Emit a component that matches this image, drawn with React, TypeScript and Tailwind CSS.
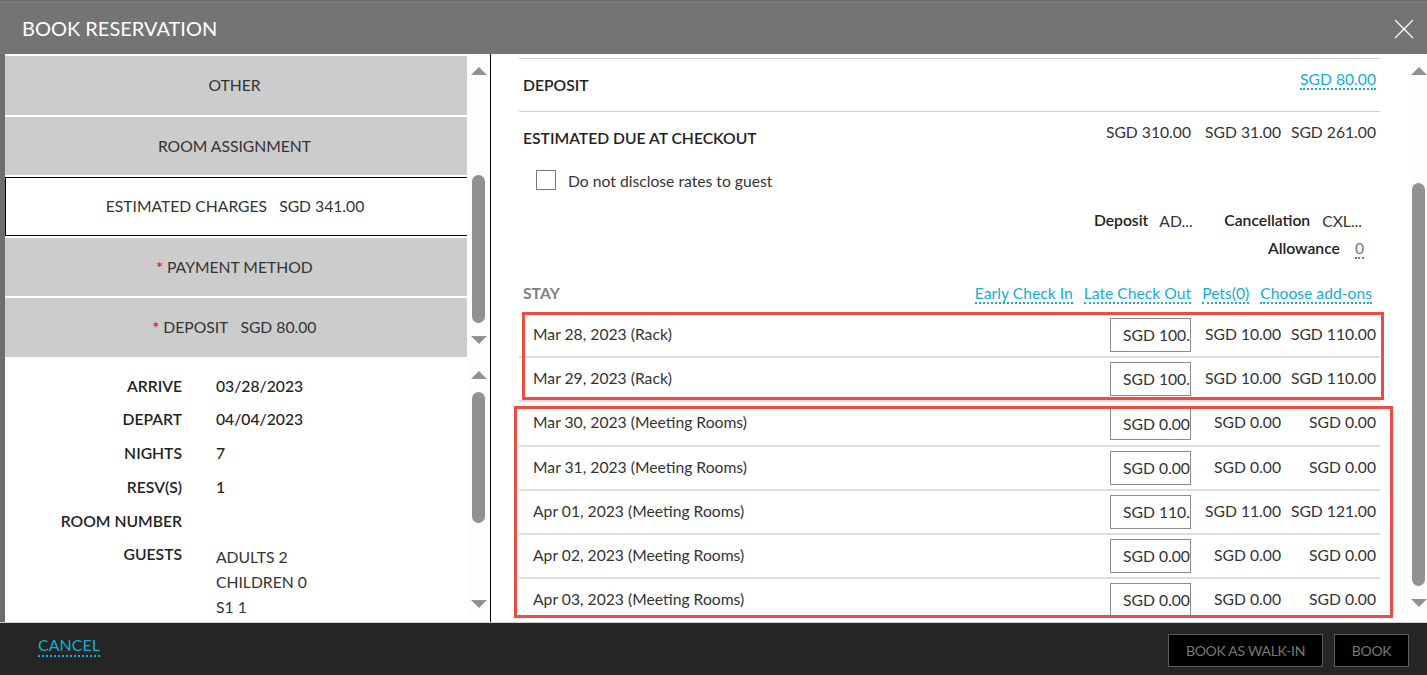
import React from "react";

function Arrow({ up, className = "" }: { up?: boolean; className?: string }) {
  return (
    <svg width="16" height="8" viewBox="0 0 16 8" className={className}>
      <path d={up ? "M0 8 L8 0 L16 8 Z" : "M0 0 L8 8 L16 0 Z"} fill="#919191" />
    </svg>
  );
}

function Nav({ children, active, h }: { children: React.ReactNode; active?: boolean; h: string }) {
  return (
    <div
      className={
        "flex items-center justify-center pr-[3px] text-[15.7px] text-[#333] " +
        h +
        " " +
        (active ? "bg-white border border-black border-r-0" : "bg-[#cccccc]")
      }
    >
      {children}
    </div>
  );
}

const stars = <span className="text-[#e0201b] font-bold mr-1">*</span>;

function Info({ label, value, h }: { label: string; value?: string; h: string }) {
  return (
    <div className={"flex items-center " + h}>
      <div className="w-[177px] text-right font-semibold text-[15.7px] text-[#222]">{label}</div>
      <div className="ml-[34px] font-medium text-[15.7px] text-[#222]">{value}</div>
    </div>
  );
}

function Link({ children, className = "" }: { children: React.ReactNode; className?: string }) {
  return (
    <span className={"text-[15.7px] leading-[18px] text-[#12aed6] border-b-2 border-dotted border-[#12aed6] " + className}>
      {children}
    </span>
  );
}

const rows = [
  ["Mar 28, 2023 (Rack)", "SGD 100.", "SGD 10.00", "SGD 110.00"],
  ["Mar 29, 2023 (Rack)", "SGD 100.", "SGD 10.00", "SGD 110.00"],
  ["Mar 30, 2023 (Meeting Rooms)", "SGD 0.00", "SGD 0.00", "SGD 0.00"],
  ["Mar 31, 2023 (Meeting Rooms)", "SGD 0.00", "SGD 0.00", "SGD 0.00"],
  ["Apr 01, 2023 (Meeting Rooms)", "SGD 110.", "SGD 11.00", "SGD 121.00"],
  ["Apr 02, 2023 (Meeting Rooms)", "SGD 0.00", "SGD 0.00", "SGD 0.00"],
  ["Apr 03, 2023 (Meeting Rooms)", "SGD 0.00", "SGD 0.00", "SGD 0.00"],
];

export default function App() {
  return (
    <div className="relative w-[1427px] h-[675px] overflow-hidden bg-[#6e6e6e] pt-[2px] font-['Lato',sans-serif] text-[#333]">
      {/* Header */}
      <div className="h-[52px] flex items-center justify-between pl-[22px] pr-[5px] bg-[#747474] border-t border-[#808080]">
        <div className="text-[20px] text-white -mt-[2px]">BOOK RESERVATION</div>
        <svg width="20" height="20" viewBox="0 0 20 20" className="mr-[8px]">
          <path d="M1 1 L19 19 M19 1 L1 19" stroke="#fff" strokeWidth="1.2" />
        </svg>
      </div>

      {/* Body */}
      <div className="ml-[5px] h-[568px] flex bg-white">
        {/* Left column */}
        <div className="w-[486px] h-full border-r border-black flex flex-col">
          <div className="h-[303px] flex overflow-hidden">
            <div className="w-[462px] pt-[2px] flex flex-col gap-[2px]">
              <Nav h="h-[59px]">OTHER</Nav>
              <Nav h="h-[58px] pt-[2px]">ROOM ASSIGNMENT</Nav>
              <Nav h="h-[59px]" active>ESTIMATED CHARGES<span className="ml-3">SGD 341.00</span></Nav>
              <Nav h="h-[58px] pt-[2px]">{stars}PAYMENT METHOD</Nav>
              <Nav h="h-[59px]">{stars}DEPOSIT<span className="ml-3">SGD 80.00</span></Nav>
            </div>
            <div className="w-[23px] bg-[#fdfdfd] flex flex-col items-center pt-[13px]">
              <Arrow up />
              <div className="mt-[100px] w-[13px] h-[148px] rounded-[7px] bg-[#919191]" />
              <Arrow className="mt-[13px]" />
            </div>
          </div>
          <div className="flex-1 flex overflow-hidden">
            <div className="w-[462px] pt-[13px]">
              <Info label="ARRIVE" value="03/28/2023" h="h-[33px]" />
              <Info label="DEPART" value="04/04/2023" h="h-[33px]" />
              <Info label="NIGHTS" value="7" h="h-[35px]" />
              <Info label="RESV(S)" value="1" h="h-[34px]" />
              <Info label="ROOM NUMBER" h="h-[34px]" />
              <div className="flex -mt-[1px]">
                <div className="w-[177px] text-right font-semibold text-[15.7px] text-[#222] leading-[33px]">GUESTS</div>
                <div className="ml-[34px] pt-[7px] text-[15.7px] leading-[25px] text-[#333]">
                  <div>ADULTS 2</div>
                  <div>CHILDREN 0</div>
                  <div>S1 1</div>
                </div>
              </div>
            </div>
            <div className="w-[23px] bg-[#fdfdfd] flex flex-col items-center pt-[14px]">
              <Arrow up />
              <div className="mt-[13px] w-[13px] h-[131px] rounded-[7px] bg-[#919191]" />
              <Arrow className="mt-[77px]" />
            </div>
          </div>
        </div>

        {/* Right column */}
        <div className="flex-1 flex overflow-hidden">
          <div className="w-[919px] pl-[28px] pr-[30px] overflow-hidden">
            <div className="mt-[4px] h-[54px] border-t border-b border-[#cfcfcf] flex items-center justify-between pl-[4px] pr-[4px]">
              <div className="mt-[2px] font-semibold text-[15.7px] text-[#222]">DEPOSIT</div>
              <Link className="-mt-[11px]">SGD 80.00</Link>
            </div>
            <div className="h-[53px] flex justify-between pl-[4px] pr-[4px]">
              <div className="pt-[17px] font-semibold text-[15.7px] leading-[18px] text-[#222]">ESTIMATED DUE AT CHECKOUT</div>
              <div className="pt-[11px] flex text-[15.7px] leading-[18px]">
                <span>SGD 310.00</span>
                <span className="w-[90px] text-right">SGD 31.00</span>
                <span className="w-[95px] text-right">SGD 261.00</span>
              </div>
            </div>
            <div className="h-[30px] ml-[17px] flex items-center text-[15.7px]">
              <div className="w-[20px] h-[20px] border border-[#777] bg-white" />
              <span className="ml-[12px] mt-[4px]">Do not disclose rates to guest</span>
            </div>
            <div className="mt-[14px] flex justify-end items-center h-[24px] text-[15.7px] pr-[18px]">
              <span className="font-semibold text-[#222] mr-[11px]">Deposit</span>
              <span className="w-[65px] mt-[2px]">AD...</span>
              <span className="font-semibold text-[#222] mr-[12px]">Cancellation</span>
              <span className="mt-[2px]">CXL...</span>
            </div>
            <div className="mt-[4px] flex justify-end items-center h-[24px] text-[15.7px] pr-[16px]">
              <span className="font-semibold text-[#222] mr-[15px]">Allowance</span>
              <span className="text-[#777] leading-[17px] border-b-2 border-dotted border-[#777]">0</span>
            </div>
            <div className="mt-[19px] h-[28px] flex items-center pl-[4px] pr-[8px]">
              <span className="font-bold text-[15.7px] text-[#808080]">STAY</span>
              <div className="ml-auto flex gap-[11px]">
                <Link>Early Check In</Link>
                <Link>Late Check Out</Link>
                <Link>Pets(0)</Link>
                <Link>Choose add-ons</Link>
              </div>
            </div>
            <div className="mt-[6px] flex flex-col">
              {rows.map((r, i) => (
                <div
                  key={i}
                  className={
                    "h-[44.2px] shrink-0 border-[#dddddd] flex items-start pl-[14px] pr-[4px] text-[15.7px] text-[#333] " +
                    (i === rows.length - 1 ? "border-b-0" : "border-b-2")
                  }
                >
                  <span className="mt-[11px] leading-[18px]">{r[0]}</span>
                  <div className="ml-auto mt-[4px] w-[81px] h-[34px] border border-[#8c8c8c] flex items-center pl-[12px] pt-[2px] overflow-hidden whitespace-nowrap">
                    {r[1]}
                  </div>
                  <span className="mt-[11px] leading-[18px] w-[90px] text-right">{r[2]}</span>
                  <span className="mt-[11px] leading-[18px] w-[95px] text-right">{r[3]}</span>
                </div>
              ))}
            </div>
          </div>
          <div className="w-[17px] bg-[#fdfdfd] flex flex-col items-center pt-[13px] overflow-hidden">
            <Arrow up />
            <div className="mt-[108px] w-[13px] h-[403px] rounded-[7px] bg-[#919191]" />
            <Arrow className="mt-[13px]" />
          </div>
        </div>
      </div>

      {/* Footer */}
      <div className="h-[53px] bg-[#252525] border-t border-[#cfcfcf] flex items-center pl-[38px] pr-[18px]">
        <span className="-mt-[6px] text-[16px] leading-[20px] text-[#12aed6] border-b-2 border-dotted border-[#12aed6]">CANCEL</span>
        <button className="ml-auto w-[155px] h-[33px] mt-[2px] bg-black border border-[#5c5c5c] text-[#777] text-[14px] tracking-[-0.3px]">BOOK AS WALK-IN</button>
        <button className="ml-[11px] w-[75px] h-[33px] mt-[2px] bg-black border border-[#5c5c5c] text-[#777] text-[14px] tracking-[-0.3px]">BOOK</button>
      </div>

      {/* Red annotation boxes */}
      <div className="absolute left-[522px] top-[312px] w-[862px] h-[88px] border-[3px] border-[#ef4b45] pointer-events-none" />
      <div className="absolute left-[514px] top-[406px] w-[879px] h-[212px] border-[3px] border-[#ef4b45] pointer-events-none" />
    </div>
  );
}
